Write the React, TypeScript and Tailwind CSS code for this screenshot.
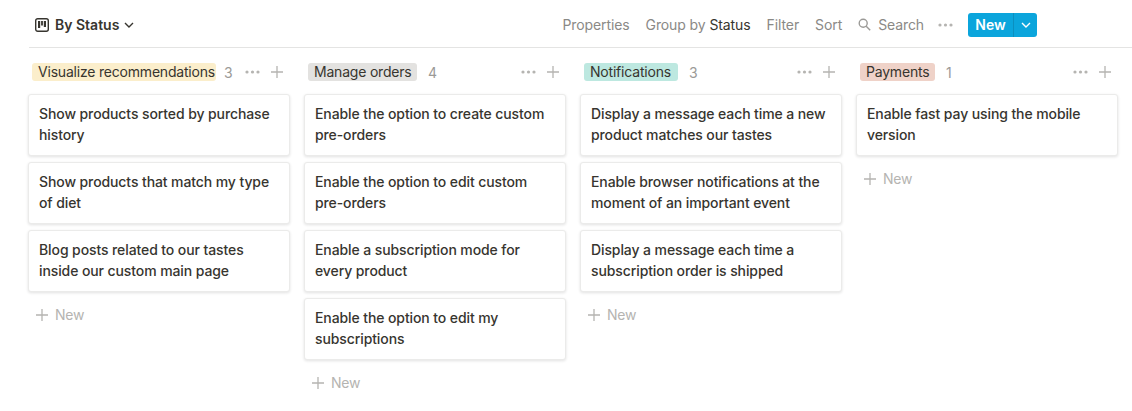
import React from "react";

const columns = [
  {
    name: "Visualize recommendations",
    pill: "bg-[#fbeecb] w-[184px]",
    count: "ml-[8px]",
    cards: [
      ["Show products sorted by purchase", "history"],
      ["Show products that match my type", "of diet"],
      ["Blog posts related to our tastes", "inside our custom main page"],
    ],
  },
  {
    name: "Manage orders",
    pill: "bg-[#e3e2e0] w-[109px]",
    count: "ml-[11px]",
    cards: [
      ["Enable the option to create custom", "pre-orders"],
      ["Enable the option to edit custom", "pre-orders"],
      ["Enable a subscription mode for", "every product"],
      ["Enable the option to edit my", "subscriptions"],
    ],
  },
  {
    name: "Notifications",
    pill: "bg-[#bde8e0] w-[94px]",
    count: "ml-[11px]",
    cards: [
      ["Display a message each time a new", "product matches our tastes"],
      ["Enable browser notifications at the", "moment of an important event"],
      ["Display a message each time a", "subscription order is shipped"],
    ],
  },
  {
    name: "Payments",
    pill: "bg-[#efd2c8] w-[75px]",
    count: "ml-[11px]",
    cards: [["Enable fast pay using the mobile", "version"]],
  },
];

const Dots = ({ color = "#b5b4b1" }: { color?: string }) => (
  <svg width="15" height="4" viewBox="0 0 15 4" fill={color}>
    <circle cx="2" cy="2" r="1.6" />
    <circle cx="7.5" cy="2" r="1.6" />
    <circle cx="13" cy="2" r="1.6" />
  </svg>
);

const Plus = () => (
  <svg width="12" height="12" viewBox="0 0 12 12" stroke="#b5b4b1" strokeWidth="1.3">
    <path d="M6 0v12M0 6h12" />
  </svg>
);

const Chevron = ({ color }: { color: string }) => (
  <svg width="10" height="6" viewBox="0 0 10 6" fill="none" stroke={color} strokeWidth="1.4">
    <path d="M1 1l4 4 4-4" />
  </svg>
);

const App = () => {
  return (
    <div className="w-[1132px] h-[411px] overflow-hidden bg-white font-['Inter',sans-serif] text-[14px] text-[#37352f]">
      <div className="ml-[29px] h-[48px] pt-[2px] flex items-center border-b border-[#e4e4e3] pr-[95px]">
        <svg width="14" height="14" viewBox="0 0 14 14" fill="none" className="ml-[6px]">
          <rect x="0.7" y="0.7" width="12.6" height="12.6" rx="2" stroke="#37352f" strokeWidth="1.4" />
          <path d="M3 3h2.2v7H3zM6.1 3h1.8v4.4H6.1zM8.8 3H11v6H8.8z" fill="#37352f" />
        </svg>
        <span className="ml-[6px] font-semibold">By Status</span>
        <span className="ml-[5px] flex"><Chevron color="#37352f" /></span>
        <div className="ml-auto flex items-center text-[#8a8986] tracking-[-0.1px]">
          <span>Properties</span>
          <span className="ml-4">Group by <span className="text-[#37352f]">Status</span></span>
          <span className="ml-4">Filter</span>
          <span className="ml-4">Sort</span>
          <svg width="13" height="13" viewBox="0 0 13 13" fill="none" stroke="#9b9a97" strokeWidth="1.4" className="ml-4">
            <circle cx="5.2" cy="5.2" r="4" />
            <path d="M8.2 8.2l4 4" />
          </svg>
          <span className="ml-[7px]">Search</span>
          <span className="ml-[14px] flex"><Dots /></span>
          <div className="ml-[15px] h-6 w-[69px] flex items-center rounded-[3px] bg-[#0ba5dc] text-white font-semibold tracking-normal">
            <span className="flex-1 h-full flex items-center justify-center">New</span>
            <span className="w-6 h-full flex items-center justify-center border-l border-[#0b8fbf]"><Chevron color="#ffffff" /></span>
          </div>
        </div>
      </div>
      <div className="flex gap-[14px] pl-[28px] pt-[15px]">
        {columns.map((col) => (
          <div key={col.name} className="w-[262px] shrink-0">
            <div className="h-[18px] flex items-center pl-[4px] pr-[7px]">
              <span className={`${col.pill} h-[18px] leading-[18px] pl-[6px] rounded-[3px] whitespace-nowrap tracking-[-0.2px]`}>{col.name}</span>
              <span className={`${col.count} text-[#9b9a97]`}>{col.cards.length}</span>
              <span className="ml-auto flex"><Dots /></span>
              <span className="ml-[11px] flex"><Plus /></span>
            </div>
            <div className="mt-[13px] flex flex-col gap-[6px]">
              {col.cards.map((lines) => (
                <div
                  key={lines[0]}
                  className="h-[62px] rounded-[3px] border border-[#ebebea] bg-white px-[10px] pt-[8px] font-medium leading-[21px] tracking-[-0.1px] shadow-[0_1px_3px_rgba(15,15,15,0.12)] whitespace-nowrap"
                >
                  <div>{lines[0]}</div>
                  <div>{lines[1]}</div>
                </div>
              ))}
            </div>
            <div className="mt-[12px] ml-[8px] h-[21px] flex items-center text-[#b5b4b1] tracking-[-0.2px]">
              <Plus />
              <span className="ml-[7px]">New</span>
            </div>
          </div>
        ))}
      </div>
    </div>
  );
};

export default App;
